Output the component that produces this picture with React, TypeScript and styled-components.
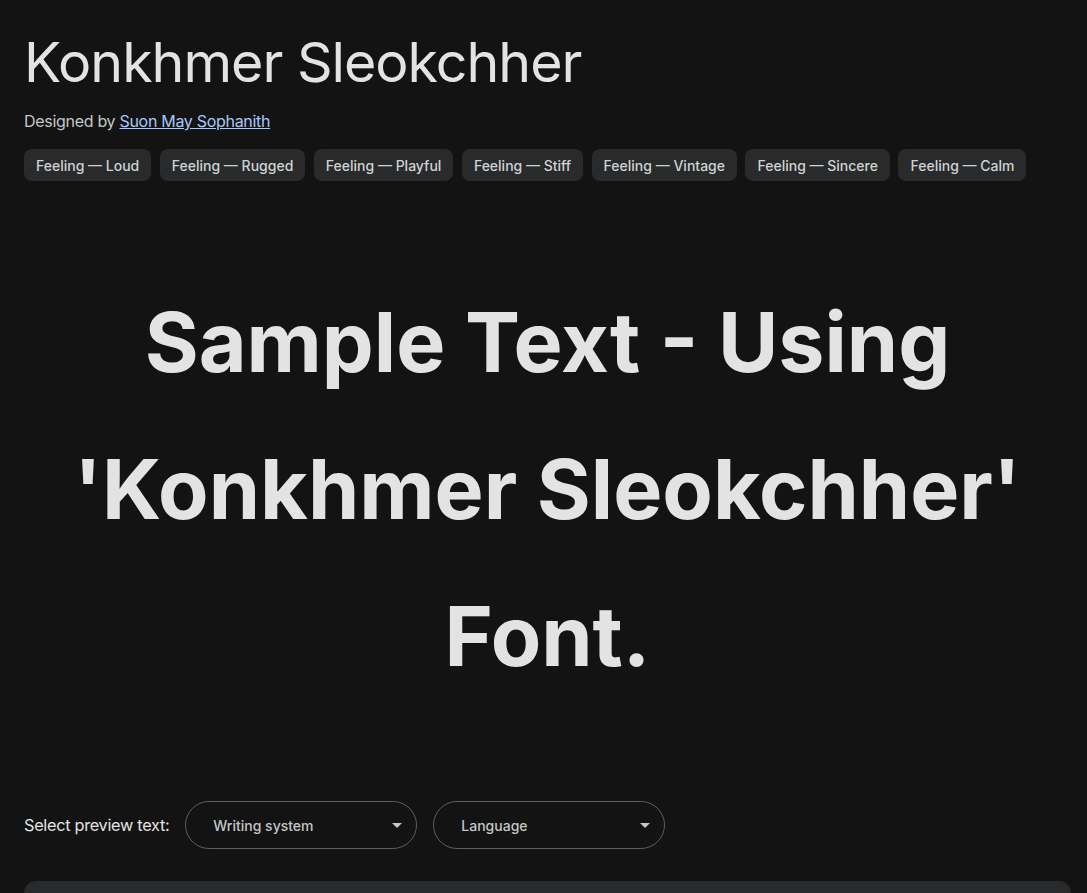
import * as React from 'react';
import styled, { createGlobalStyle } from 'styled-components';

const Global = createGlobalStyle`
  html, body {
    margin: 0;
    padding: 0;
    background: #131313;
    color: #e3e3e3;
    font-family: "Inter", "Noto Sans", sans-serif;
  }
`;

const Page = styled.div`
  padding: 24px 16px 0 24px;
  display: flex;
  flex-direction: column;
`;

const Title = styled.h1`
  margin: 6px 0 0;
  font-weight: 400;
  font-size: 55.5px;
  line-height: 64px;
  letter-spacing: -1px;
  color: #e3e3e3;
`;

const Byline = styled.div`
  margin-top: 16px;
  font-size: 16px;
  line-height: 22px;
  letter-spacing: -0.3px;
  color: #c4c7c5;

  a {
    color: #a8c7fa;
    text-decoration: underline;
  }
`;

const Tags = styled.div`
  display: flex;
  flex-wrap: wrap;
  gap: 8.5px;
  margin-top: 17px;
`;

const Tag = styled.span`
  display: inline-flex;
  align-items: center;
  height: 32px;
  padding: 0 12px;
  border-radius: 8px;
  background: #282a2c;
  font-size: 14px;
  font-weight: 500;
  color: #d0d3d1;
`;

const Sample = styled.p`
  margin: 88px 0 0;
  text-align: center;
  font-weight: 700;
  font-size: 82.5px;
  line-height: 147px;
  color: #e3e3e3;
`;

const Controls = styled.div`
  display: flex;
  align-items: center;
  gap: 16px;
  margin-top: 91px;
`;

const Label = styled.span`
  font-size: 16.3px;
  letter-spacing: -0.3px;
  color: #e3e3e3;
`;

const Select = styled.div`
  box-sizing: border-box;
  width: 232px;
  height: 48px;
  border: 1px solid #5e5e5e;
  border-radius: 24px;
  display: flex;
  align-items: center;
  justify-content: space-between;
  padding: 0 14px 0 27px;
  font-size: 14px;
  font-weight: 500;
  color: #c4c7c5;
`;

const Caret = styled.span`
  width: 0;
  height: 0;
  border-left: 5px solid transparent;
  border-right: 5px solid transparent;
  border-top: 5px solid #c4c7c5;
`;

const Panel = styled.div`
  margin-top: 32px;
  height: 120px;
  border-radius: 12px;
  background: #282a2c;
`;

const feelings = ['Loud', 'Rugged', 'Playful', 'Stiff', 'Vintage', 'Sincere', 'Calm'];

export default function App() {
  return (
    <Page>
      <Global />
      <Title>Konkhmer Sleokchher</Title>
      <Byline>
        Designed by <a href="#">Suon May Sophanith</a>
      </Byline>
      <Tags>
        {feelings.map((f) => (
          <Tag key={f}>Feeling — {f}</Tag>
        ))}
      </Tags>
      <Sample>Sample Text - Using 'Konkhmer Sleokchher' Font.</Sample>
      <Controls>
        <Label>Select preview text:</Label>
        <Select>
          Writing system
          <Caret />
        </Select>
        <Select>
          Language
          <Caret />
        </Select>
      </Controls>
      <Panel />
    </Page>
  );
}
